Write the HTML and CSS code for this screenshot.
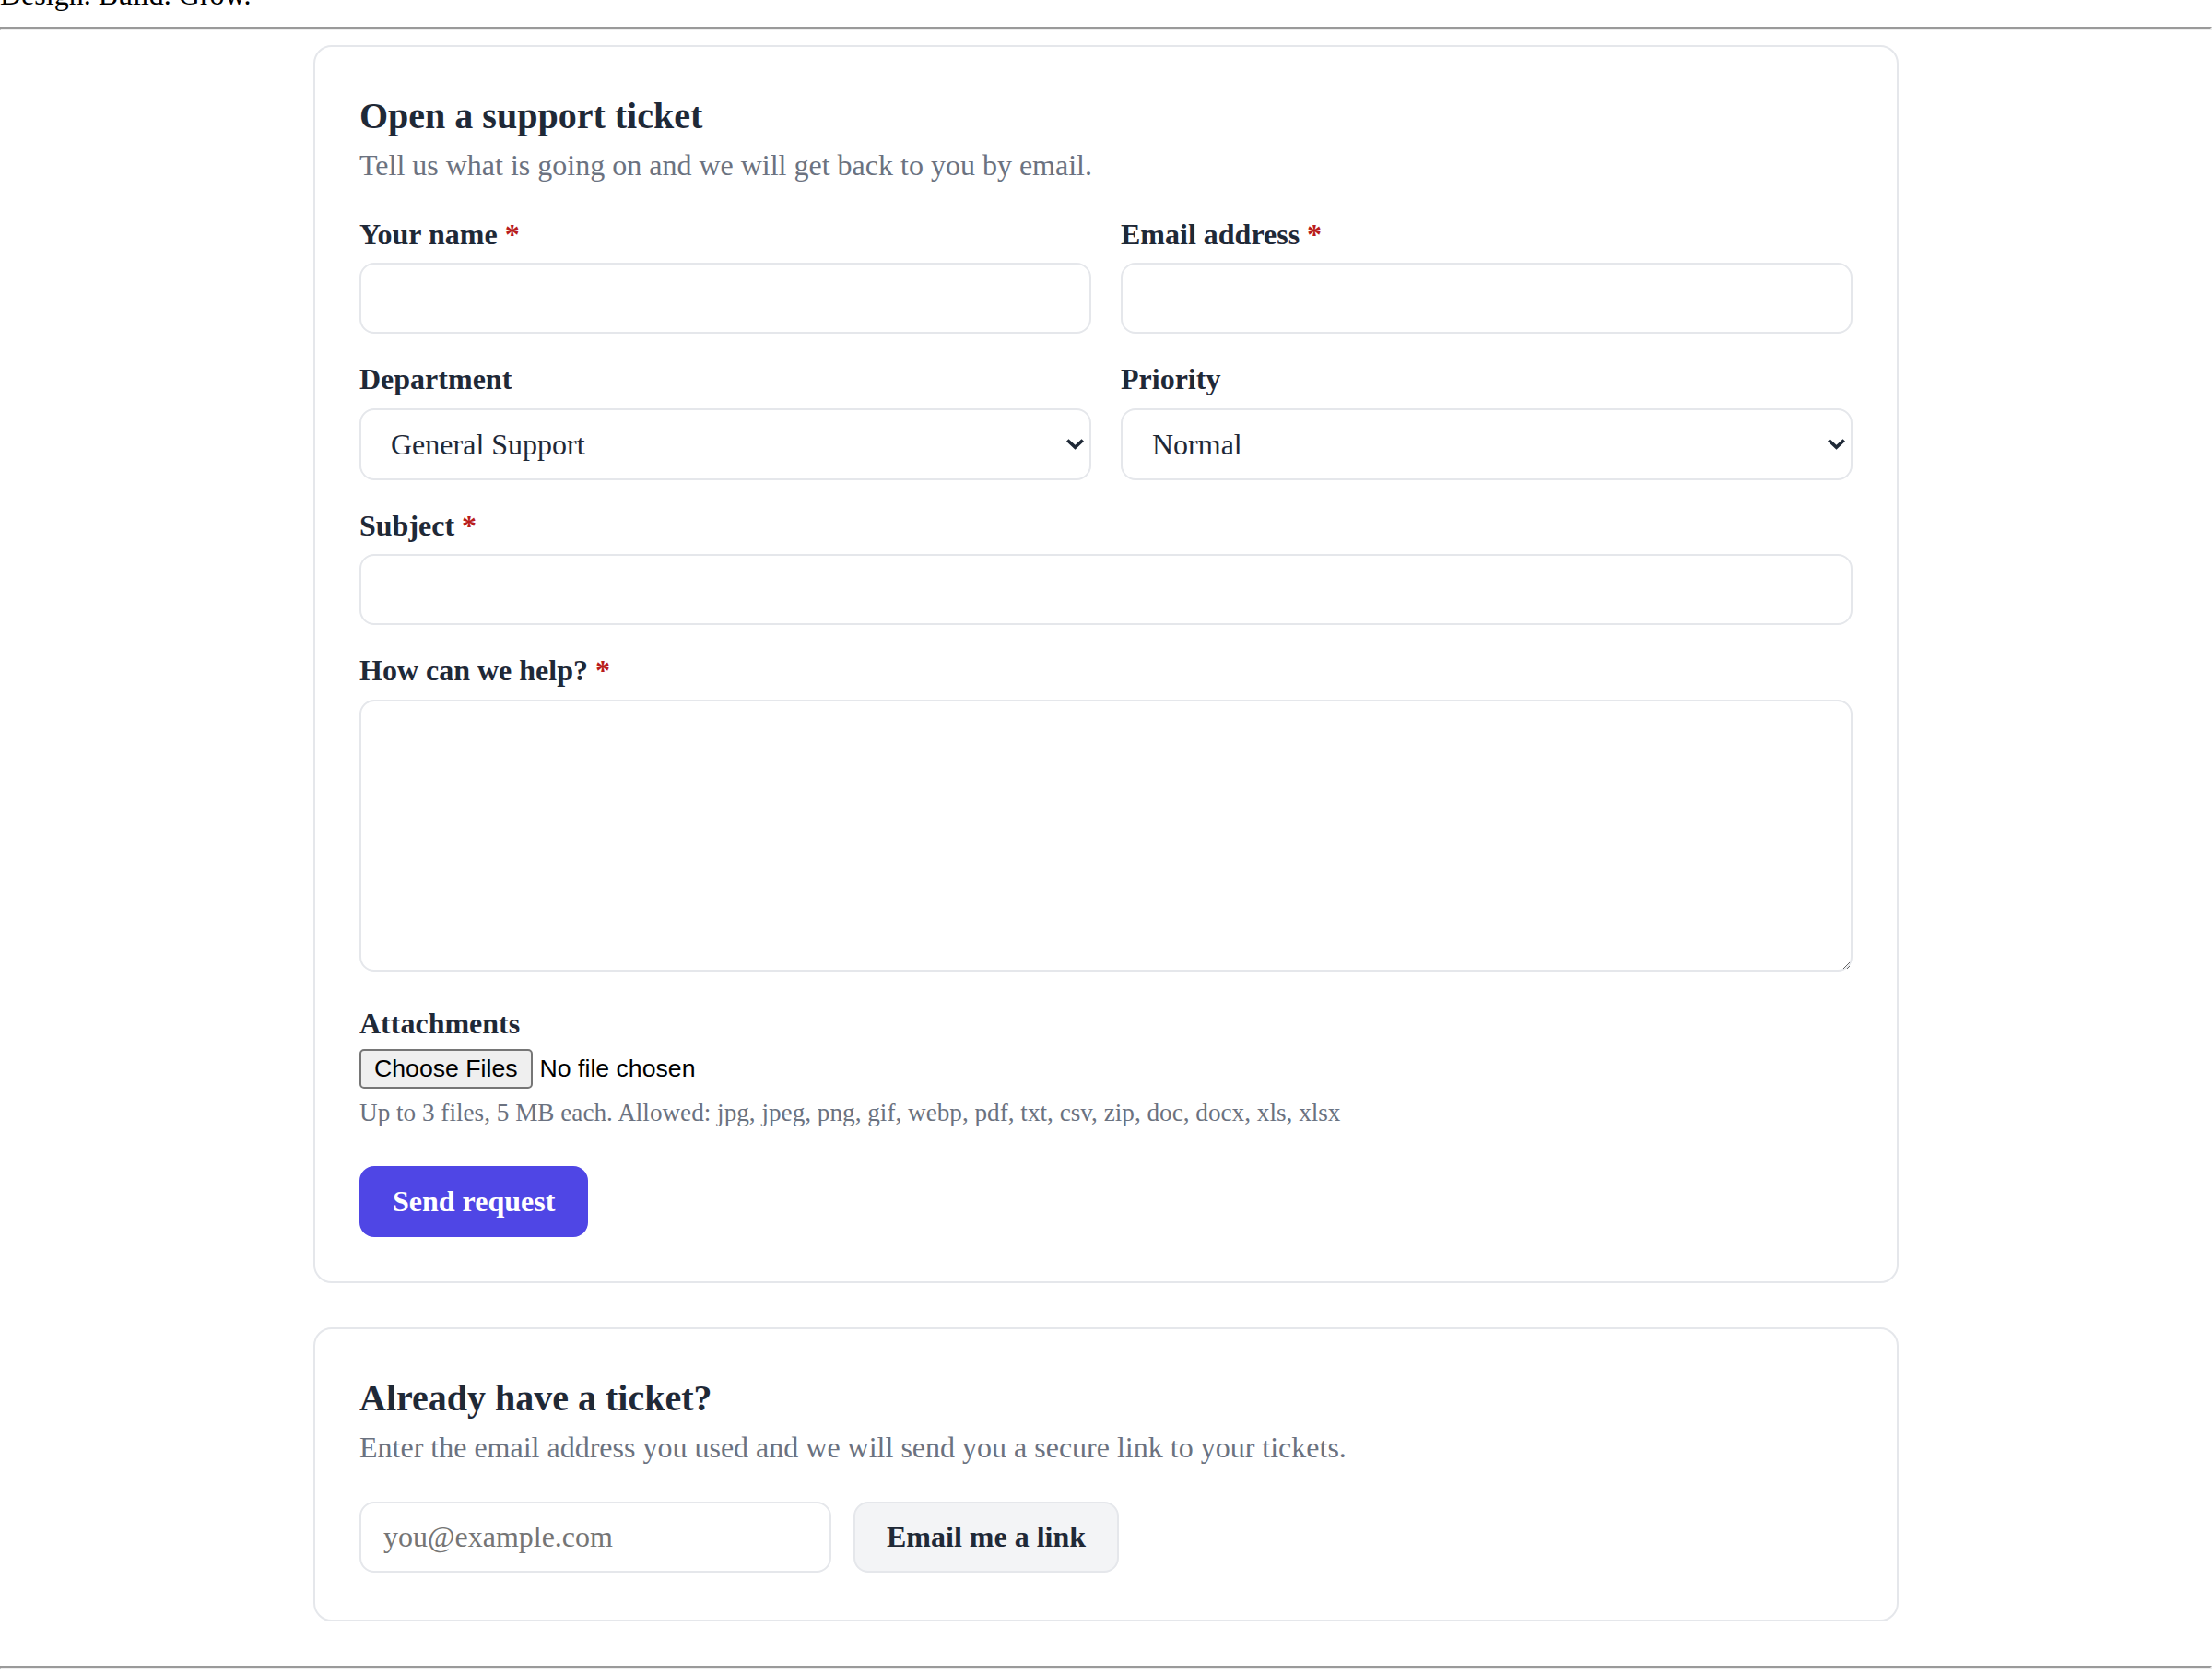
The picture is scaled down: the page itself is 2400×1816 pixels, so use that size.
FILE: index.html
```html
<!DOCTYPE html>
<html lang="en">
<head>
<meta charset="utf-8">
<title>Support</title>
<link rel="stylesheet" href="styles.css">
</head>
<body>
<header class="site-header">
  <div class="tagline">Design. Build. Grow.</div>
</header>
<hr class="rule">
<main class="page">
  <section class="card">
    <h2 class="card-title">Open a support ticket</h2>
    <p class="card-lead">Tell us what is going on and we will get back to you by email.</p>
    <form class="ticket-form">
      <div class="grid-2">
        <div class="field">
          <label class="label" for="name">Your name <span class="req">*</span></label>
          <input class="control" id="name" type="text">
        </div>
        <div class="field">
          <label class="label" for="email">Email address <span class="req">*</span></label>
          <input class="control" id="email" type="email">
        </div>
        <div class="field">
          <label class="label" for="dept">Department</label>
          <div class="select-wrap">
            <select class="control select" id="dept">
              <option>General Support</option>
            </select>
            <svg class="chevron" viewBox="0 0 10 6" aria-hidden="true"><path d="M0 1.25 L1.3 0 L5 3.45 L8.7 0 L10 1.25 L5 6 Z"/></svg>
          </div>
        </div>
        <div class="field">
          <label class="label" for="prio">Priority</label>
          <div class="select-wrap">
            <select class="control select" id="prio">
              <option>Normal</option>
            </select>
            <svg class="chevron" viewBox="0 0 10 6" aria-hidden="true"><path d="M0 1.25 L1.3 0 L5 3.45 L8.7 0 L10 1.25 L5 6 Z"/></svg>
          </div>
        </div>
      </div>
      <div class="field">
        <label class="label" for="subject">Subject <span class="req">*</span></label>
        <input class="control" id="subject" type="text">
      </div>
      <div class="field field-message">
        <label class="label" for="message">How can we help? <span class="req">*</span></label>
        <textarea class="control textarea" id="message"></textarea>
      </div>
      <div class="field field-attach">
        <label class="label" for="files">Attachments</label>
        <input class="file-input" id="files" type="file" multiple>
        <p class="hint">Up to 3 files, 5 MB each. Allowed: jpg, jpeg, png, gif, webp, pdf, txt, csv, zip, doc, docx, xls, xlsx</p>
      </div>
      <div class="actions">
        <button class="btn-primary" type="button">Send request</button>
      </div>
    </form>
  </section>

  <section class="card">
    <h2 class="card-title">Already have a ticket?</h2>
    <p class="card-lead">Enter the email address you used and we will send you a secure link to your tickets.</p>
    <form class="lookup">
      <input class="control lookup-input" type="email" placeholder="you@example.com">
      <button class="btn-secondary" type="button">Email me a link</button>
    </form>
  </section>
</main>
<hr class="rule">
</body>
</html>
```

FILE: styles.css
```css
html {
  zoom: 2;
}

body {
  margin: 0;
  font-family: "Liberation Serif", "Times New Roman", serif;
  font-size: 16px;
  color: #000;
  background: #fff;
}

.site-header {
  margin-top: -12px;
}

.tagline {
  line-height: normal;
}

.rule {
  margin: 8px 0;
}

.page {
  max-width: 860px;
  margin: 0 auto;
}

.card {
  background: #fff;
  border: 1px solid #e5e7eb;
  border-radius: 10px;
  padding: 24px;
  margin-bottom: 24px;
  color: #1f2937;
}

.card-title {
  margin: 0;
  font-size: 20px;
  line-height: 27px;
  font-weight: 700;
  color: #1f2937;
}

.card-lead {
  margin: 3.5px 0 18.75px;
  line-height: 1.2;
  color: #6b7280;
}

.ticket-form {
  margin: 0;
}

.grid-2 {
  display: grid;
  grid-template-columns: 1fr 1fr;
  column-gap: 16px;
}

.field {
  margin-bottom: 15.5px;
}

.field-message {
  margin-bottom: 19px;
}

.label {
  display: block;
  font-weight: 700;
  line-height: 18.2px;
  margin-bottom: 6.5px;
  color: #1f2937;
}

.req {
  color: #b91c1c;
}

.control {
  display: block;
  width: 100%;
  box-sizing: border-box;
  font: inherit;
  line-height: normal;
  padding: 9px 12px;
  border: 1px solid #e5e7eb;
  border-radius: 8px;
  background: #fff;
  color: #1f2937;
}

.select-wrap {
  position: relative;
}

.select {
  appearance: none;
  -webkit-appearance: none;
  height: 39px;
  padding: 9px 28px 9px 16px;
  cursor: pointer;
}

.chevron {
  position: absolute;
  right: 4px;
  top: 50%;
  width: 9.5px;
  height: 6px;
  margin-top: -3px;
  fill: #1f2937;
  pointer-events: none;
}

.textarea {
  height: 147.5px;
  resize: vertical;
}

.file-input {
  font-family: "Liberation Sans", Arial, sans-serif;
  font-size: 13.333px;
  color: #000;
}

.field-attach {
  margin-bottom: 21px;
}

.field-attach .label {
  margin-bottom: 5px;
}

.hint {
  margin: 5.5px 0 0;
  font-size: 13.6px;
  line-height: normal;
  color: #6b7280;
}

.actions {
  display: flex;
}

.btn-primary {
  font: inherit;
  font-weight: 700;
  line-height: normal;
  color: #fff;
  background: #4f46e5;
  border: 0;
  border-radius: 8px;
  padding: 10px 18px;
}

.lookup {
  display: flex;
  align-items: center;
  gap: 12px;
  margin: 0;
  padding: 1px 0 1.5px;
}

.lookup-input {
  width: 256px;
}

.btn-secondary {
  font: inherit;
  font-weight: 700;
  line-height: normal;
  color: #1f2937;
  background: #f3f4f6;
  border: 1px solid #e5e7eb;
  border-radius: 8px;
  padding: 9px 17px;
}
```
